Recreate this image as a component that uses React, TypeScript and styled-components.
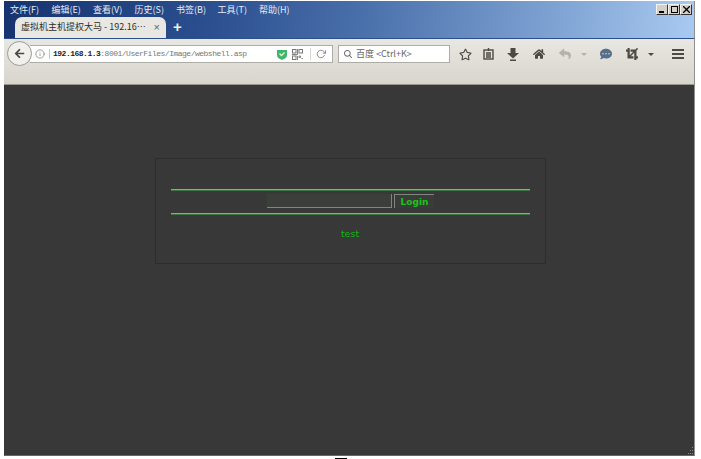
import React, { FC } from "react";
import styled, { createGlobalStyle } from "styled-components";
import { FaHome, FaReply, FaCommentDots, FaCrop, FaRegStar, FaArrowLeft } from "react-icons/fa";
import { IoSearch } from "react-icons/io5";
import { FiInfo, FiRotateCw } from "react-icons/fi";

const GlobalStyle = createGlobalStyle`
  html, body { margin: 0; padding: 0; background: #fff; }
  * { box-sizing: border-box; }
`;

const cjk = `"Noto Sans CJK SC", "Liberation Sans", sans-serif`;

const Page = styled.div`
  position: relative;
  width: 701px;
  height: 459px;
  padding: 1px 6px 3px 4px;
  background: #fff;
  overflow: hidden;
`;

const Win = styled.div`
  height: 100%;
  display: flex;
  flex-direction: column;
  border-right: 1px solid #8f8f8f;
`;

const TitleBar = styled.div`
  height: 38px;
  flex: none;
  display: flex;
  flex-direction: column;
  background: linear-gradient(97deg, #16336f 0%, #2b4f8f 30%, #4a70ab 52%, #7fa3d3 80%, #a9caf0 100%);
  border-bottom: 1px solid #2c4f8c;
`;

const MenuRow = styled.div`
  height: 16px;
  display: flex;
  align-items: center;
  justify-content: space-between;
  padding: 1px 2px 0 6px;
`;

const Menu = styled.div`
  display: flex;
`;

const MenuItem = styled.span`
  width: 41.5px;
  font: 9px/12px ${cjk};
  color: #e6ebf4;
  white-space: nowrap;
`;

const WinButtons = styled.div`
  display: flex;
`;

const WinButton = styled.div`
  width: 12px;
  height: 11px;
  display: flex;
  align-items: center;
  justify-content: center;
  background: #d4d0c8;
  border: 1px solid;
  border-color: #f4f4f4 #333 #333 #f4f4f4;
`;

const TabRow = styled.div`
  flex: 1;
  display: flex;
  align-items: flex-end;
  padding-left: 11px;
`;

const Tab = styled.div`
  width: 151px;
  height: 21px;
  display: flex;
  align-items: center;
  justify-content: space-between;
  padding: 0 6px 2px 6px;
  background: #e9e7e2;
  border-radius: 7px 7px 0 0;
  font: 9px/12px ${cjk};
  color: #2e2e2e;
  white-space: nowrap;
`;

const TabClose = styled.span`
  font: 11px/12px "Liberation Sans", sans-serif;
  color: #666;
`;

const NewTab = styled.span`
  margin: 0 0 3px 7px;
  font: bold 15px/16px "Liberation Sans", sans-serif;
  color: #eef2f8;
`;

const Toolbar = styled.div`
  height: 46px;
  flex: none;
  display: flex;
  align-items: flex-start;
  padding-top: 2px;
  background: linear-gradient(#e9e7e2, #d8d5cd);
  border-bottom: 1px solid #9a978f;
`;

const BackButton = styled.div`
  position: relative;
  z-index: 1;
  width: 25px;
  height: 25px;
  margin-left: 3px;
  flex: none;
  display: flex;
  align-items: center;
  justify-content: center;
  border-radius: 50%;
  border: 1px solid #9b9a94;
  background: #f1f0ec;
  color: #4a4a44;
  font-size: 11px;
`;

const Field = styled.div<{ $width: number }>`
  width: ${({ $width }) => $width}px;
  height: 18px;
  margin-top: 4px;
  flex: none;
  display: flex;
  align-items: center;
  background: #fff;
  border: 1px solid #aeaca6;
`;

const UrlField = styled(Field)`
  margin-left: -2px;
  padding-left: 5px;
  border-left: none;
`;

const SearchField = styled(Field)`
  margin-left: 5px;
  padding-left: 4px;
  gap: 3px;
  color: #6f6f6f;
  font-size: 10px;
`;

const InfoIcon = styled.span`
  display: flex;
  font-size: 10px;
  color: #8a8a8a;
  padding-right: 4px;
  border-right: 1px solid #c9c9c9;
  margin-right: 3px;
`;

const Url = styled.span`
  flex: 1;
  font: 8px/12px "Liberation Mono", monospace;
  letter-spacing: -0.5px;
  color: #777;
  white-space: nowrap;
`;

const Host = styled.b`
  color: #222;
`;

const UrlIcons = styled.div`
  display: flex;
  align-items: center;
  gap: 5px;
  padding-right: 6px;
  color: #777;
  font-size: 10px;
`;

const Divider = styled.span`
  width: 1px;
  height: 12px;
  margin-left: 2px;
  background: #d4d4d4;
`;

const SearchText = styled.span`
  font: 9px/12px ${cjk};
  color: #666;
  white-space: nowrap;
`;

const Tools = styled.div`
  flex: 1;
  height: 18px;
  margin-top: 4px;
  display: flex;
  align-items: center;
`;

const Tool = styled.span<{ $width: number; $color?: string; $size?: number }>`
  width: ${({ $width }) => $width}px;
  flex: none;
  display: flex;
  align-items: center;
  justify-content: center;
  font-size: ${({ $size }) => $size || 12}px;
  color: ${({ $color }) => $color || "#4c4a44"};
`;

const Caret = styled.span<{ $color: string }>`
  width: 0;
  height: 0;
  border-left: 3px solid transparent;
  border-right: 3px solid transparent;
  border-top: 3px solid ${({ $color }) => $color};
`;

const Content = styled.div`
  position: relative;
  flex: 1;
  display: flex;
  justify-content: center;
  align-items: flex-start;
  padding: 73px 0 0 3px;
  background: #383838;
  border-bottom: 1px solid #6b675f;
`;

const LoginPanel = styled.div`
  width: 391px;
  height: 106px;
  padding: 30px 15px 0;
  border: 1px solid #2d2d2d;
  display: flex;
  flex-direction: column;
  align-items: center;
`;

const Rule = styled.div`
  width: 359px;
  height: 1px;
  flex: none;
  background: #4fd24f;
  box-shadow: 0 1px 0 rgba(73, 194, 76, 0.45);
`;

const LoginRow = styled.form`
  height: 23px;
  flex: none;
  display: flex;
  align-items: flex-start;
  gap: 2px;
  padding-top: 4px;
`;

const PassInput = styled.input`
  width: 125px;
  height: 14px;
  padding: 0;
  background: #3a3f3a;
  border: 0;
  border-right: 1px solid #7f867f;
  border-bottom: 1px solid #7f867f;
`;

const LoginButton = styled.button`
  width: 40px;
  height: 14px;
  padding: 0;
  background: #383d38;
  border: 0;
  border-left: 1px solid #7f867f;
  border-top: 1px solid #7f867f;
  color: #1fc01f;
  font: bold 9px/12px "DejaVu Sans", sans-serif;
`;

const Message = styled.div`
  margin: 14px 1px 0 0;
  font: 9.5px/12px "DejaVu Sans", sans-serif;
  color: #10b410;
`;

const Grip = styled.svg`
  position: absolute;
  right: 0;
  bottom: 0;
`;

const Cursor = styled.div`
  position: absolute;
  left: 335px;
  bottom: 0;
  width: 12px;
  height: 1px;
  background: #000;
`;

const menus = ["文件(F)", "编辑(E)", "查看(V)", "历史(S)", "书签(B)", "工具(T)", "帮助(H)"];

const ReaderIcon: FC = () => (
  <svg width="11" height="12" viewBox="0 0 11 12" fill="none" stroke="#4c4a44" strokeWidth="1.4">
    <rect x="1" y="2" width="9" height="9" />
    <path d="M3 5h5M3 7h5M3 9h5M5.5 0v3" />
  </svg>
);

const DownloadIcon: FC = () => (
  <svg width="12" height="13" viewBox="0 0 12 13" fill="#4c4a44">
    <path d="M3.5 0h5v5H12L6 10.5 0 5h3.5z" />
    <rect x="3" y="11.5" width="6" height="1.5" />
  </svg>
);

const QrIcon: FC = () => (
  <svg width="11" height="11" viewBox="0 0 11 11" fill="none" stroke="#777">
    <rect x="0.5" y="0.5" width="3.5" height="3.5" />
    <rect x="7" y="0.5" width="3.5" height="3.5" />
    <rect x="0.5" y="7" width="3.5" height="3.5" />
    <path d="M7 7h1.5v1.5H7zM9.5 9.5H11M5.5 0v5.5H0M5.5 7v4" strokeWidth="0.9" />
  </svg>
);

const ShieldIcon: FC = () => (
  <svg width="10" height="11" viewBox="0 0 10 11">
    <path d="M0 1h10v5c0 3-3 4-5 5-2-1-5-2-5-5z" fill="#3fb56b" />
    <path d="M2.5 4.5l2 2 3-3" fill="none" stroke="#e8f5d0" strokeWidth="1.3" />
  </svg>
);

const MenuIcon: FC = () => (
  <svg width="12" height="10" viewBox="0 0 12 10" fill="#4c4a44">
    <rect width="12" height="2" />
    <rect y="4" width="12" height="2" />
    <rect y="8" width="12" height="2" />
  </svg>
);

const App: FC = () => (
  <Page>
    <GlobalStyle />
    <Win>
      <TitleBar>
        <MenuRow>
          <Menu>
            {menus.map((m) => (
              <MenuItem key={m}>{m}</MenuItem>
            ))}
          </Menu>
          <WinButtons>
            <WinButton>
              <svg width="7" height="7"><rect x="0" y="5" width="5" height="2" fill="#000" /></svg>
            </WinButton>
            <WinButton>
              <svg width="7" height="7"><rect x="0.5" y="0.5" width="6" height="6" fill="none" stroke="#000" /></svg>
            </WinButton>
            <WinButton>
              <svg width="7" height="7"><path d="M0 0l7 7M7 0l-7 7" stroke="#000" strokeWidth="1.3" /></svg>
            </WinButton>
          </WinButtons>
        </MenuRow>
        <TabRow>
          <Tab>
            <span>虚拟机主机提权大马 - 192.16…</span>
            <TabClose>×</TabClose>
          </Tab>
          <NewTab>+</NewTab>
        </TabRow>
      </TitleBar>
      <Toolbar>
        <BackButton>
          <FaArrowLeft />
        </BackButton>
        <UrlField $width={303}>
          <InfoIcon>
            <FiInfo />
          </InfoIcon>
          <Url>
            <Host>192.168.1.3</Host>:8001/UserFiles/Image/webshell.asp
          </Url>
          <UrlIcons>
            <ShieldIcon />
            <QrIcon />
            <Divider />
            <FiRotateCw />
          </UrlIcons>
        </UrlField>
        <SearchField $width={112}>
          <IoSearch />
          <SearchText>百度 &lt;Ctrl+K&gt;</SearchText>
        </SearchField>
        <Tools>
          <Tool $width={30} $size={13}>
            <FaRegStar />
          </Tool>
          <Tool $width={16}>
            <ReaderIcon />
          </Tool>
          <Tool $width={34}>
            <DownloadIcon />
          </Tool>
          <Tool $width={18}>
            <FaHome />
          </Tool>
          <Tool $width={34} $color="#b4b2ac">
            <FaReply />
          </Tool>
          <Tool $width={4}>
            <Caret $color="#b4b2ac" />
          </Tool>
          <Tool $width={40} $color="#56708a">
            <FaCommentDots />
          </Tool>
          <Tool $width={12}>
            <FaCrop />
          </Tool>
          <Tool $width={26}>
            <Caret $color="#4c4a44" />
          </Tool>
          <Tool $width={28}>
            <MenuIcon />
          </Tool>
        </Tools>
      </Toolbar>
      <Content>
        <LoginPanel>
          <Rule />
          <LoginRow>
            <PassInput type="password" />
            <LoginButton type="button">Login</LoginButton>
          </LoginRow>
          <Rule />
          <Message>test</Message>
        </LoginPanel>
        <Grip width="8" height="8" viewBox="0 0 8 8" fill="#8a8a8a">
          <rect x="6" y="0" width="1" height="1" />
          <rect x="4" y="3" width="1" height="1" />
          <rect x="6" y="3" width="1" height="1" />
          <rect x="2" y="6" width="1" height="1" />
          <rect x="4" y="6" width="1" height="1" />
          <rect x="6" y="6" width="1" height="1" />
        </Grip>
      </Content>
    </Win>
    <Cursor />
  </Page>
);

export default App;
